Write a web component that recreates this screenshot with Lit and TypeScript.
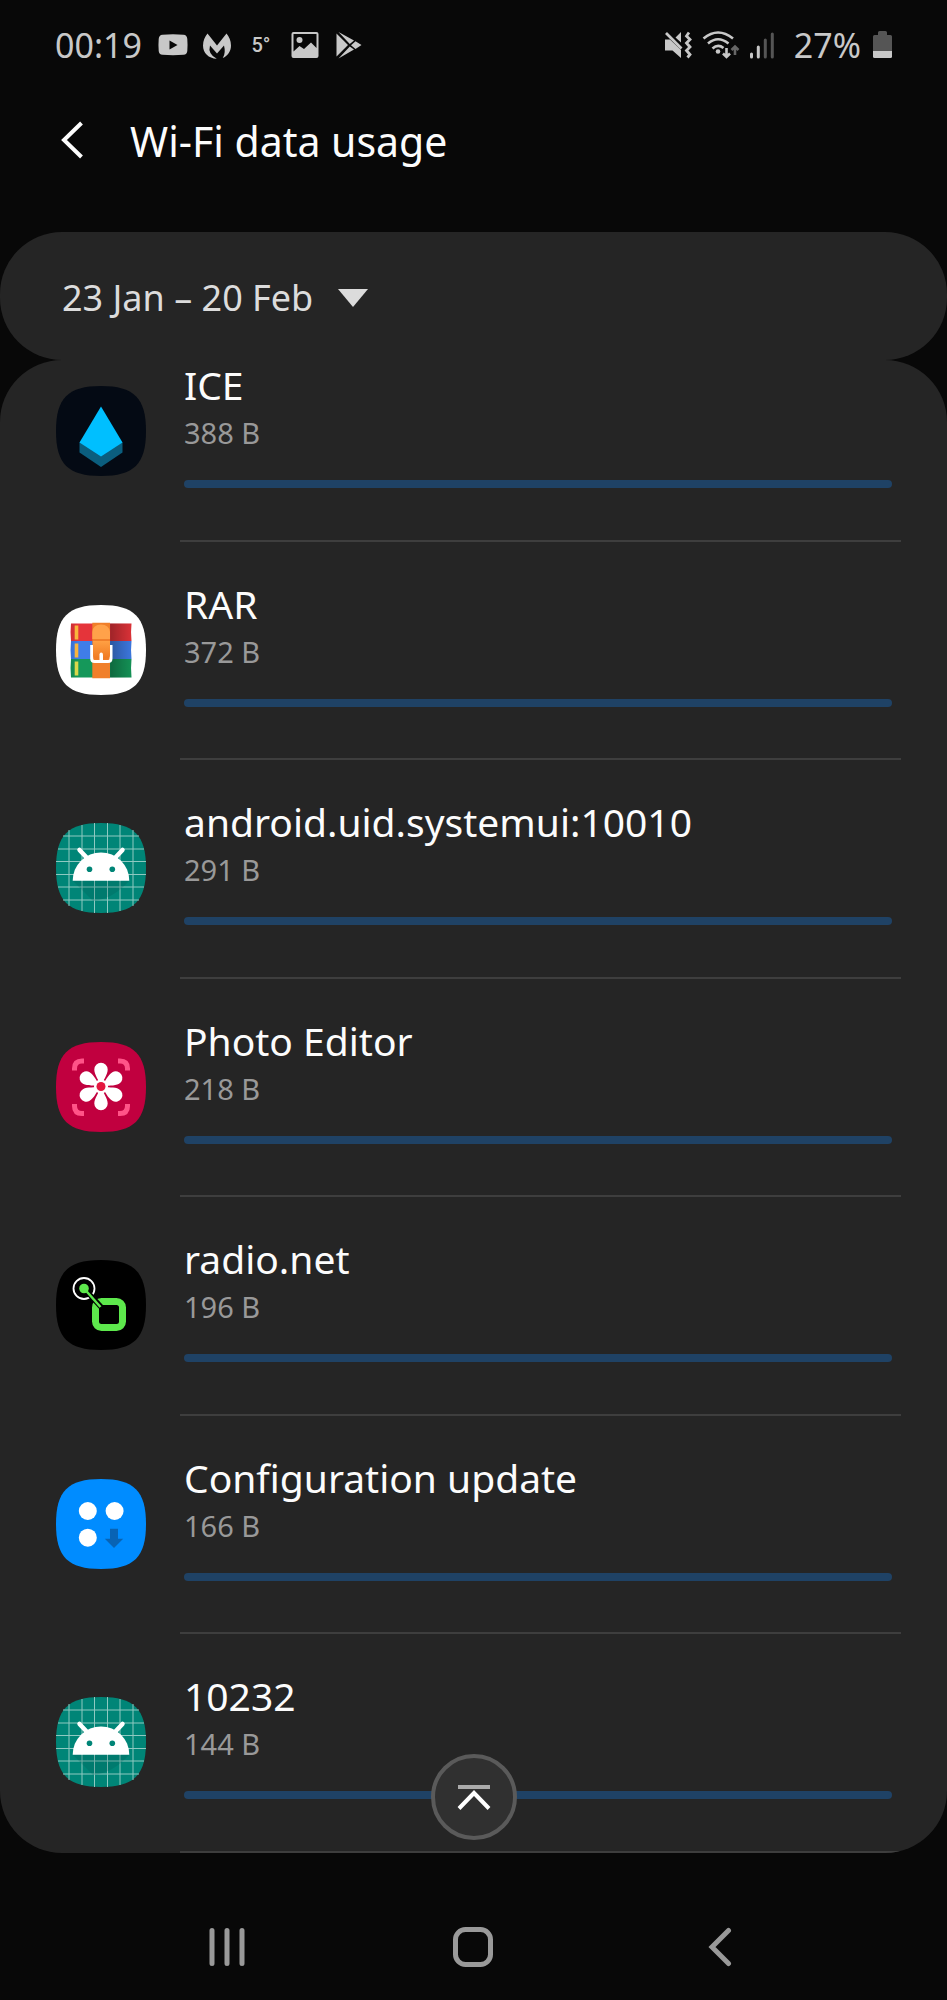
import { LitElement, html, svg, css, nothing, TemplateResult } from "lit";
import { customElement, property, state } from "lit/decorators.js";

type IconName = "ice" | "rar" | "android" | "photo" | "radio" | "config";

interface AppUsage {
  name: string;
  size: string;
  share: number;
  icon: IconName;
}

const USAGE: AppUsage[] = [
  { name: "ICE", size: "388 B", share: 0, icon: "ice" },
  { name: "RAR", size: "372 B", share: 0, icon: "rar" },
  { name: "android.uid.systemui:10010", size: "291 B", share: 0, icon: "android" },
  { name: "Photo Editor", size: "218 B", share: 0, icon: "photo" },
  { name: "radio.net", size: "196 B", share: 0, icon: "radio" },
  { name: "Configuration update", size: "166 B", share: 0, icon: "config" },
  { name: "10232", size: "144 B", share: 0, icon: "android" },
];

const SQUIRCLE = "M45 0C78 0 90 12 90 45S78 90 45 90 0 78 0 45 12 0 45 0Z";
const GRID = [13, 26, 38.5, 51.5, 64, 77];
const PETALS = [0, 60, 120, 180, 240, 300];

const ART: Record<IconName, () => TemplateResult> = {
  ice: () => svg`
    <path d=${SQUIRCLE} fill="#040a14"/>
    <path d="M23.500 56.500L45 42 66.500 56.500V66.500L45 81 23.500 66.500Z" fill="#0b5e7e"/>
    <path d="M45 20.500L66.500 56.500 45 70.500 23.500 56.500Z" fill="#00bfff"/>`,
  rar: () => svg`
    <defs>
      <linearGradient id="shade" x1="0" x2="1" y1="0" y2="0">
        <stop offset="0" stop-color="#000" stop-opacity=".1"/>
        <stop offset=".12" stop-color="#000" stop-opacity="0"/>
        <stop offset=".6" stop-color="#000" stop-opacity="0"/>
        <stop offset=".66" stop-color="#000" stop-opacity=".3"/>
        <stop offset="1" stop-color="#000" stop-opacity=".05"/>
      </linearGradient>
      <linearGradient id="strap" x1="0" x2="0" y1="0" y2="1">
        <stop offset="0" stop-color="#ffa043"/>
        <stop offset="1" stop-color="#f07a22"/>
      </linearGradient>
    </defs>
    <path d=${SQUIRCLE} fill="#fff"/>
    <path d="M15 18.500H75.500Q74.500 27 75.500 36H15Q14 27 15 18.500Z" fill="#e5343a"/>
    <path d="M15 36H75.500Q74.500 45 75.500 54H15Q14 45 15 36Z" fill="#3f7de8"/>
    <path d="M15 54H75.500Q74.500 63 75.500 72.500H15Q14 63 15 54Z" fill="#15985a"/>
    <path d="M15 18.500H75.500V72.500H15Z" fill="url(#shade)"/>
    <path d="M18.700 20.500h3.600v14h-3.600zM18.700 38.500h3.600v14h-3.600z" fill="#f9b53c"/>
    <path d="M18.700 56.500h3.600v14h-3.600z" fill="#d9d84a"/>
    <path d="M36.300 17.700H54V73.300H36.300Z" fill="#f07f2a"/>
    <path d="M36.300 27Q37 19.500 45 19.500T54 27V34H36.300Z" fill="#ffa24a"/>
    <path d="M35.700 40V53.500Q35.700 56.500 38.700 56.500H52Q55 56.500 55 53.500V40" fill="none" stroke="#fff" stroke-width="3"/>
    <path d="M37 36H54V50Q54 53.500 50.500 53.500H40.500Q37 53.500 37 50Z" fill="url(#strap)"/>
    <path d="M43.500 57V49.500Q43.500 47.500 45.200 47.500T47 49.500V57Z" fill="#fff"/>`,
  android: () => svg`
    <path d=${SQUIRCLE} fill="#008577"/>
    <g stroke="#8fc9c1" stroke-width="1">
      ${GRID.map((p) => {
        const inset = p < 20 || p > 70 ? 7 : p < 30 || p > 60 ? 2 : 0;
        return svg`<path d=${`M${p} ${inset}V${90 - inset}M${inset} ${p}H${90 - inset}`}/>`;
      })}
    </g>
    <path d="M17 58L37 78Q57 76 73 58Z" fill="#00524a" opacity=".2"/>
    <path d="M16.700 57.700A28.300 28.300 0 0 1 73.300 57.700Z" fill="#fff"/>
    <path d="M23.500 27L32 36M66.500 27L58 36" stroke="#fff" stroke-width="4.500" stroke-linecap="round"/>
    <circle cx="33.500" cy="46.300" r="2.800" fill="#008577"/>
    <circle cx="56.300" cy="46.300" r="2.800" fill="#008577"/>`,
  photo: () => svg`
    <path d=${SQUIRCLE} fill="#c1003f"/>
    <path d="M18.500 28.500V26.500Q18.500 19 26 19H28M62 19H64Q71.500 19 71.500 26.500V28.500M71.500 62V64Q71.500 71.500 64 71.500H62M28 71.500H26Q18.500 71.500 18.500 64V62" fill="none" stroke="#ff5488" stroke-width="5"/>
    ${PETALS.map(
      (a) => svg`<path transform=${`rotate(${a} 45 44.5)`} fill="#fff"
        d="M45 44.500C43 38 38.300 33 38.300 27.500A6.700 6.700 0 0 1 51.700 27.500C51.700 33 47 38 45 44.500Z"/>`
    )}
    <circle cx="45" cy="44.500" r="7" fill="#fff"/>
    <circle cx="45" cy="44.500" r="4.500" fill="#e4173f"/>`,
  radio: () => svg`
    <path d=${SQUIRCLE} fill="#000"/>
    <circle cx="28" cy="28.500" r="10.500" fill="none" stroke="#fff" stroke-width="1.800"/>
    <rect x="39.500" y="41.500" width="27" height="26" rx="6" fill="none" stroke="#5de84c" stroke-width="7"/>
    <path d="M30 30.500L46 48" stroke="#000" stroke-width="5.500"/>
    <path d="M28 28.500L44.500 47" stroke="#5de84c" stroke-width="2.500"/>
    <circle cx="28" cy="28.500" r="4.800" fill="#5de84c"/>`,
  config: () => svg`
    <path d=${SQUIRCLE} fill="#008cff"/>
    <circle cx="31.800" cy="32" r="9" fill="#fff"/>
    <circle cx="58.600" cy="32" r="9" fill="#fff"/>
    <circle cx="31.800" cy="58.700" r="9" fill="#fff"/>
    <path d="M54 49.700H62V59.700H67.200L58 69 48.800 59.700H54Z" fill="#0863b4"/>`,
};

@customElement("status-bar")
class StatusBar extends LitElement {
  static styles = css`
    :host {
      display: flex;
      justify-content: space-between;
      align-items: center;
      height: 90px;
      padding: 0 55px;
      color: #c8c8c8;
      font-size: 34px;
      line-height: 48px;
    }
    .group {
      display: flex;
      align-items: center;
      gap: 14px;
    }
    .icons {
      margin-left: 2px;
    }
    .signals {
      gap: 9px;
    }
    .power {
      gap: 12px;
      margin-left: 4px;
    }
    .degree {
      width: 30px;
      font: 500 20px/30px Roboto, sans-serif;
      text-align: center;
    }
    svg {
      display: block;
      fill: currentColor;
    }
  `;

  render() {
    return html`
      <div class="group">
        <time>00:19</time>
        <div class="group icons">
          <svg width="30" height="30" viewBox="0 0 30 30" aria-hidden="true">
            <path fill-rule="evenodd" d="M4.500 4.800Q15 3.800 25.500 4.800 29 5 29.300 9 29.800 15 29.300 21 29 24.500 25.500 24.800 15 25.600 4.500 24.800 1 24.500.7 21 .2 15 .7 9 1 5 4.500 4.800ZM11.500 10.500V19.500L19.500 15Z"/>
          </svg>
          <svg width="30" height="30" viewBox="0 0 30 30" aria-hidden="true">
            <path d="M5.500 3.500L15 15.500 24.500 3.500Q29 9 29 15.500C29 21.500 25.500 26 20.800 28Q24 23 22 15.500L15 23.500 8 15.500Q5.500 24 14.800 28.700C6.500 28.500 1 23 1 15.500Q1 9 5.500 3.500Z"/>
          </svg>
          <span class="degree">5°</span>
          <svg width="30" height="30" viewBox="0 0 30 30" aria-hidden="true">
            <path fill-rule="evenodd" d="M3.500 2H26.500Q28.500 2 28.500 4V26Q28.500 28 26.500 28H3.500Q1.500 28 1.500 26V4Q1.500 2 3.500 2ZM3.500 4V21.500L9.500 16 14 19 21 12.500 26.500 18V4Z"/>
            <circle cx="9.500" cy="10" r="3"/>
          </svg>
          <svg width="30" height="30" viewBox="0 0 30 30" aria-hidden="true">
            <path d="M2.500 3.500L14 15 2.500 26.500ZM4.500 2L20 10.500 15.800 14ZM4.500 28.500L15.800 16.500 20 19.500ZM17 15.200L21.500 11.300 27.500 15 21.500 19Z"/>
          </svg>
        </div>
      </div>
      <div class="group">
        <div class="group signals">
          <svg width="30" height="30" viewBox="0 0 30 30" aria-hidden="true">
            <path d="M2 9.500H7L18 20V28L9.500 20.500H2ZM12.500 7.500L18 2V12.500Z"/>
            <path d="M3 3L18.500 18.500M26 2.500L23.500 6 27 9.500 23.500 13 27 17 23.500 20.500 27 24.500 24.500 27.500" fill="none" stroke="currentColor" stroke-width="2.800"/>
          </svg>
          <svg width="38" height="30" viewBox="0 0 38 30" aria-hidden="true">
            <g fill="none" stroke="currentColor" stroke-width="2.600">
              <path d="M1.500 8.500Q16 -3.500 31 8.500M6 13.500Q16 5 26.500 13.500M10.500 18.500Q16 13.500 21.500 18"/>
              <path d="M24.500 18V27M21 23.500L24.500 27 28 23.500"/>
              <path d="M33 25V16.500M29.500 20L33 16.500 36.500 20" stroke="#666"/>
            </g>
            <circle cx="16" cy="21.500" r="2.300"/>
          </svg>
          <svg width="27" height="30" viewBox="0 0 27 30" aria-hidden="true">
            <g fill="none" stroke="currentColor" stroke-width="3" stroke-linecap="round">
              <path d="M2.500 24V27M9.300 17V27"/>
              <path d="M16.300 10V27M23.300 4V27" stroke="#555"/>
            </g>
          </svg>
        </div>
        <div class="group power">
          <span>27%</span>
          <svg width="19" height="30" viewBox="0 0 19 30" aria-hidden="true">
            <path d="M1.500 5H5V2.500Q5 1 6.500 1H12.500Q14 1 14 2.500V5H17.500Q19 5 19 6.500V21H0V6.500Q0 5 1.500 5Z" fill="#555"/>
            <path d="M0 21H19V26.500Q19 28 17.500 28H1.500Q0 28 0 26.500Z"/>
          </svg>
        </div>
      </div>
    `;
  }
}

@customElement("usage-row")
class UsageRow extends LitElement {
  @property({ attribute: false }) app?: AppUsage;

  static styles = css`
    :host {
      display: flex;
      align-items: stretch;
      flex: 1;
      gap: 34px;
      padding: 0 46px 0 56px;
    }
    .icon {
      flex: none;
      width: 90px;
      height: 90px;
      margin-top: 63px;
    }
    .body {
      flex: 1;
      min-width: 0;
      padding: 38px 9px 32px 4px;
      border-bottom: 2px solid #3e3e3e;
    }
    .name,
    .size {
      margin: 0;
      font-weight: 400;
      line-height: 48px;
    }
    .name {
      color: #fcfcfc;
      font-size: 39px;
      overflow-wrap: anywhere;
    }
    .size {
      color: #999;
      font-size: 29px;
    }
    .meter {
      display: block;
      width: 100%;
      height: 8px;
      margin-top: 23px;
      border: 0;
      border-radius: 4px;
      overflow: hidden;
      appearance: none;
      background: #1f4265;
    }
    .meter::-webkit-progress-bar {
      background: #1f4265;
    }
    .meter::-webkit-progress-value {
      background: #3d8fe0;
    }
  `;

  render() {
    const app = this.app;
    if (!app) return nothing;
    return html`
      <svg class="icon" viewBox="0 0 90 90" aria-hidden="true">${ART[app.icon]()}</svg>
      <div class="body">
        <h2 class="name">${app.name}</h2>
        <p class="size">${app.size}</p>
        <progress class="meter" max="100" .value=${app.share} aria-label=${`${app.name} data usage`}></progress>
      </div>
    `;
  }
}

@customElement("app-root")
class AppRoot extends LitElement {
  @state() private apps = USAGE;

  static styles = css`
    :host {
      display: flex;
      flex-direction: column;
      box-sizing: border-box;
      min-height: 100vh;
      background: #080808;
      color: #fcfcfc;
      font-family: "Noto Sans", sans-serif;
    }
    button {
      display: grid;
      place-items: center;
      margin: 0;
      padding: 0;
      border: 0;
      background: none;
      color: inherit;
    }
    svg {
      display: block;
      fill: none;
      stroke: currentColor;
    }
    .header {
      display: flex;
      align-items: center;
      gap: 36px;
      padding: 23px 50px 63px;
    }
    .back {
      width: 44px;
      height: 56px;
    }
    .title {
      margin: 0;
      font-size: 41px;
      font-weight: 400;
      line-height: 56px;
    }
    .period {
      display: flex;
      align-items: center;
      gap: 16px;
      padding: 38px 62px 34px;
      border-radius: 62px;
      background: #252525;
      color: #dcdcdc;
    }
    .dates {
      margin: 0;
      padding: 0 8px 0 0;
      border: 0;
      appearance: none;
      background: none;
      color: inherit;
      font: 36px/56px "Noto Sans", sans-serif;
    }
    .caret {
      fill: currentColor;
      stroke: none;
    }
    .panel {
      position: relative;
      display: flex;
      flex: 1;
      border-radius: 62px;
      background: #252525;
      overflow: hidden;
    }
    .list {
      display: flex;
      flex: 1;
      flex-direction: column;
      min-width: 0;
      margin: -37px 0 0;
      padding: 0;
      list-style: none;
    }
    .item {
      display: flex;
      flex: 1;
    }
    .to-top {
      position: absolute;
      bottom: 13px;
      left: calc(50% - 43px);
      box-sizing: border-box;
      width: 86px;
      height: 86px;
      border: 4px solid #5a5a5a;
      border-radius: 50%;
      background: #303030;
    }
    .nav {
      display: grid;
      grid-template-columns: repeat(3, 1fr);
      padding: 66px 104px 25px;
      color: #999;
    }
    .key {
      height: 56px;
    }
  `;

  private toTop() {
    window.scrollTo({ top: 0, behavior: "smooth" });
  }

  render() {
    return html`
      <status-bar></status-bar>
      <header class="header">
        <button class="back" type="button" aria-label="Navigate up">
          <svg width="28" height="40" viewBox="0 0 28 40" stroke-width="4"><path d="M23.500 2L6 19 23.500 36"/></svg>
        </button>
        <h1 class="title">Wi-Fi data usage</h1>
      </header>
      <div class="period">
        <select class="dates" aria-label="Billing period">
          <option>23 Jan – 20 Feb</option>
        </select>
        <svg class="caret" width="30" height="18" viewBox="0 0 30 18" aria-hidden="true"><path d="M0 0H30L15 18Z"/></svg>
      </div>
      <main class="panel">
        <ul class="list">
          ${this.apps.map((app) => html`<li class="item"><usage-row .app=${app}></usage-row></li>`)}
        </ul>
        <button class="to-top" type="button" aria-label="Scroll to top" @click=${this.toTop}>
          <svg width="36" height="28" viewBox="0 0 36 28" stroke-width="4">
            <path d="M2 4H34" stroke="#aaa"/>
            <path d="M3 25.500L18 10 33 25.500" stroke="#fff"/>
          </svg>
        </button>
      </main>
      <nav class="nav" aria-label="System navigation">
        <button class="key" type="button" aria-label="Recent apps">
          <svg width="36" height="40" viewBox="0 0 36 40" stroke-width="5" stroke-linecap="round"><path d="M3 3.500V36.500M18 3.500V36.500M33 3.500V36.500"/></svg>
        </button>
        <button class="key" type="button" aria-label="Home">
          <svg width="42" height="42" viewBox="0 0 42 42" stroke-width="5"><rect x="3.500" y="3.500" width="35" height="35" rx="10"/></svg>
        </button>
        <button class="key" type="button" aria-label="Back">
          <svg width="24" height="40" viewBox="0 0 24 40" stroke-width="5" stroke-linecap="round"><path d="M20.500 3.500L4 20 20.500 36.500"/></svg>
        </button>
      </nav>
    `;
  }
}
